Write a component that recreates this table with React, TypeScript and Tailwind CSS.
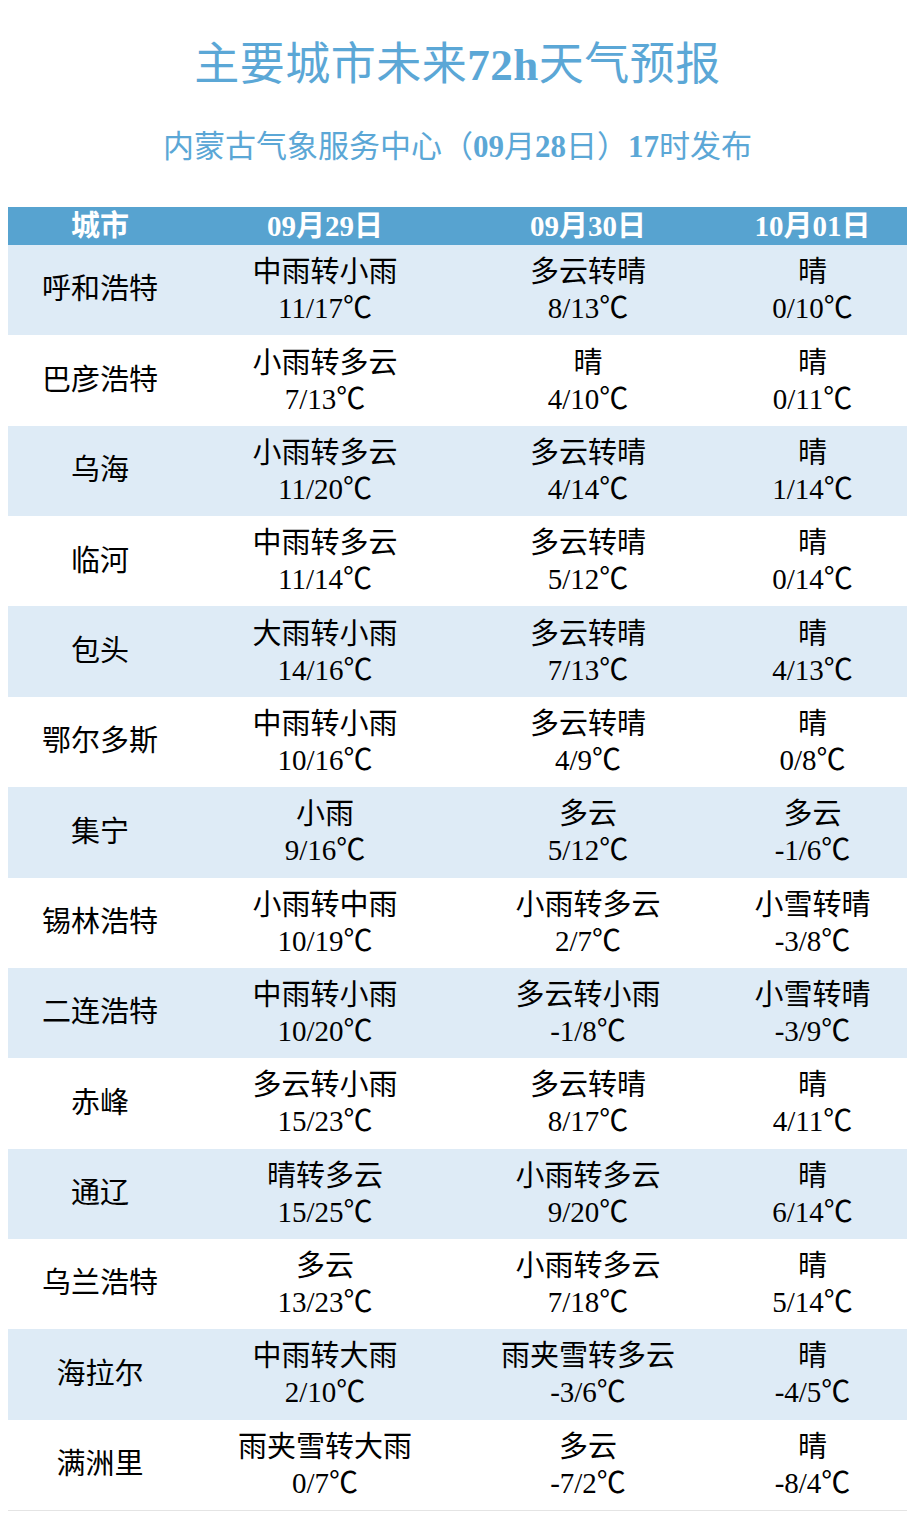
import React from "react";

const rows: [string, string, string, string, string, string, string][] = [
  ["呼和浩特", "中雨转小雨", "11/17℃", "多云转晴", "8/13℃", "晴", "0/10℃"],
  ["巴彦浩特", "小雨转多云", "7/13℃", "晴", "4/10℃", "晴", "0/11℃"],
  ["乌海", "小雨转多云", "11/20℃", "多云转晴", "4/14℃", "晴", "1/14℃"],
  ["临河", "中雨转多云", "11/14℃", "多云转晴", "5/12℃", "晴", "0/14℃"],
  ["包头", "大雨转小雨", "14/16℃", "多云转晴", "7/13℃", "晴", "4/13℃"],
  ["鄂尔多斯", "中雨转小雨", "10/16℃", "多云转晴", "4/9℃", "晴", "0/8℃"],
  ["集宁", "小雨", "9/16℃", "多云", "5/12℃", "多云", "-1/6℃"],
  ["锡林浩特", "小雨转中雨", "10/19℃", "小雨转多云", "2/7℃", "小雪转晴", "-3/8℃"],
  ["二连浩特", "中雨转小雨", "10/20℃", "多云转小雨", "-1/8℃", "小雪转晴", "-3/9℃"],
  ["赤峰", "多云转小雨", "15/23℃", "多云转晴", "8/17℃", "晴", "4/11℃"],
  ["通辽", "晴转多云", "15/25℃", "小雨转多云", "9/20℃", "晴", "6/14℃"],
  ["乌兰浩特", "多云", "13/23℃", "小雨转多云", "7/18℃", "晴", "5/14℃"],
  ["海拉尔", "中雨转大雨", "2/10℃", "雨夹雪转多云", "-3/6℃", "晴", "-4/5℃"],
  ["满洲里", "雨夹雪转大雨", "0/7℃", "多云", "-7/2℃", "晴", "-8/4℃"],
];

function Cell({ top, bottom }: { top: string; bottom: string }) {
  return (
    <div className="flex flex-col items-center justify-center leading-[36px]">
      <span>{top}</span>
      <span>{bottom}</span>
    </div>
  );
}

export default function App() {
  return (
    <div
      className="w-[915px] h-[1520px] bg-white text-black"
      style={{ fontFamily: '"Liberation Serif", "Noto Sans CJK SC", serif' }}
    >
      <div className="flex justify-center pt-[36px] h-[100px]">
        <h1 className="text-[45px] leading-[58px] text-[#5ba7d6] tracking-[0.5px]">
          主要城市未来<span className="font-bold">72h</span>天气预报
        </h1>
      </div>
      <div className="flex justify-center pt-[27px] h-[107px]">
        <p className="text-[31px] leading-[40px] text-[#5ba7d6]">
          内蒙古气象服务中心（<span className="font-bold">09</span>月<span className="font-bold">28</span>日）<span className="font-bold">17</span>时发布
        </p>
      </div>
      <div className="mx-[8px] w-[899px] border-b border-[#e4e4e4]">
        <div className="grid grid-cols-[184px_266px_260px_189px] h-[38px] bg-[#57a3d0] text-white font-bold text-[29px] leading-[38px] items-center">
          <div className="text-center">城市</div>
          <div className="text-center">09月29日</div>
          <div className="text-center">09月30日</div>
          <div className="text-center">10月01日</div>
        </div>
        {rows.map((r, i) => (
          <div
            key={r[0]}
            className={`grid grid-cols-[184px_266px_260px_189px] h-[90.36px] items-center text-[29px] ${
              i % 2 === 0 ? "bg-[#deebf6]" : "bg-white"
            }`}
          >
            <div className="text-center">{r[0]}</div>
            <Cell top={r[1]} bottom={r[2]} />
            <Cell top={r[3]} bottom={r[4]} />
            <Cell top={r[5]} bottom={r[6]} />
          </div>
        ))}
      </div>
    </div>
  );
}
